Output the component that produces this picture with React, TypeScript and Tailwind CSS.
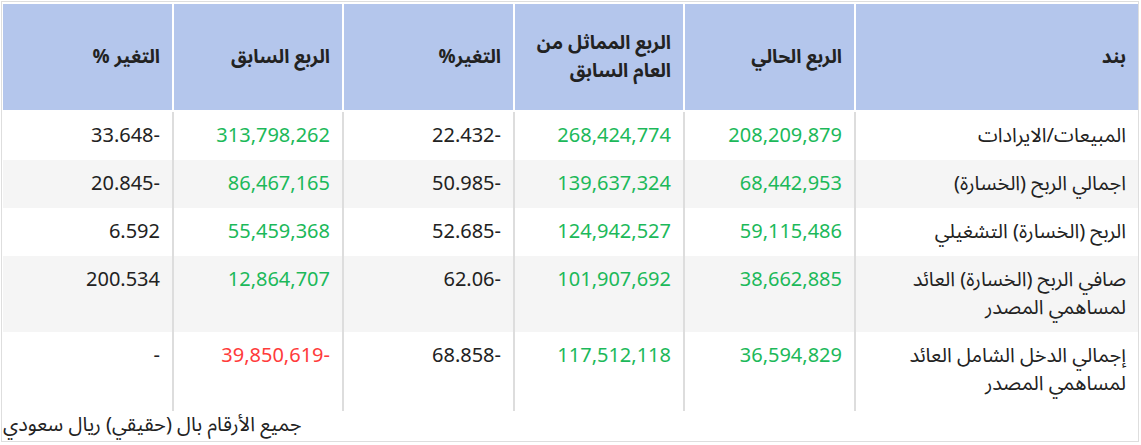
const FONT = "font-['Noto_Sans_Arabic','Noto_Sans','DejaVu_Sans',sans-serif]";

type Row = {
  item: string[];
  cur: string;
  sameLastYear: string;
  change1: string;
  prev: string;
  change2: string;
  prevNegative?: boolean;
};

const ROWS: Row[] = [
  {
    item: ["المبيعات/الايرادات"],
    cur: "208,209,879",
    sameLastYear: "268,424,774",
    change1: "-22.432",
    prev: "313,798,262",
    change2: "-33.648",
  },
  {
    item: ["اجمالي الربح (الخسارة)"],
    cur: "68,442,953",
    sameLastYear: "139,637,324",
    change1: "-50.985",
    prev: "86,467,165",
    change2: "-20.845",
  },
  {
    item: ["الربح (الخسارة) التشغيلي"],
    cur: "59,115,486",
    sameLastYear: "124,942,527",
    change1: "-52.685",
    prev: "55,459,368",
    change2: "6.592",
  },
  {
    item: ["صافي الربح (الخسارة) العائد", "لمساهمي المصدر"],
    cur: "38,662,885",
    sameLastYear: "101,907,692",
    change1: "-62.06",
    prev: "12,864,707",
    change2: "200.534",
  },
  {
    item: ["إجمالي الدخل الشامل العائد", "لمساهمي المصدر"],
    cur: "36,594,829",
    sameLastYear: "117,512,118",
    change1: "-68.858",
    prev: "-39,850,619",
    change2: "-",
    prevNegative: true,
  },
];

const HEADERS: string[][] = [
  ["بند"],
  ["الربع الحالي"],
  ["الربع المماثل من", "العام السابق"],
  ["التغير%"],
  ["الربع السابق"],
  ["التغير %"],
];

// minus sign is shown trailing, as in the source data view
const fmt = (v: string) => (v.length > 1 && v.startsWith("-") ? v.slice(1) + "-" : v);

function Lines({ lines }: { lines: string[] }) {
  return (
    <>
      {lines.map((l, i) => (
        <div key={i}>{l}</div>
      ))}
    </>
  );
}

export default function App() {
  const cell = "border-l-2 border-[#dddddd] px-3 pt-[10px] pb-[10px] align-top last:border-l-0";
  const green = "text-[#1cb95a]";

  return (
    <div className={`${FONT} ml-px mt-px mr-[2px] border border-[#dedede] pl-px pt-[2px] pb-[2px] text-[#222] bg-white`}>
      <table dir="rtl" className="w-[1135px] table-fixed border-separate border-spacing-0 text-[20px] leading-[28px]">
        <colgroup>
          <col className="w-[284px]" />
          <col className="w-[171px]" />
          <col className="w-[170px]" />
          <col className="w-[171px]" />
          <col className="w-[170px]" />
          <col />
        </colgroup>
        <thead>
          <tr>
            {HEADERS.map((h, i) => (
              <th
                key={i}
                className="h-[108px] border-l-2 border-b-2 border-white bg-[#b4c6ec] px-3 text-right align-middle text-[19px] font-bold last:border-l-0"
              >
                <Lines lines={h} />
              </th>
            ))}
          </tr>
        </thead>
        <tbody>
          {ROWS.map((r, i) => (
            <tr key={i} className={i % 2 === 1 ? "bg-[#f5f5f5]" : "bg-white"}>
              <td className={`${cell} ${i === 4 ? "pb-[13px]" : ""}`}>
                <Lines lines={r.item} />
              </td>
              <td className={`${cell} ${green}`}>
                <span dir="ltr">{r.cur}</span>
              </td>
              <td className={`${cell} ${green}`}>
                <span dir="ltr">{r.sameLastYear}</span>
              </td>
              <td className={cell}>
                <span dir="ltr">{fmt(r.change1)}</span>
              </td>
              <td className={`${cell} ${r.prevNegative ? "text-[#ff3b3b]" : green}`}>
                <span dir="ltr">{fmt(r.prev)}</span>
              </td>
              <td className={cell}>
                <span dir="ltr">{fmt(r.change2)}</span>
              </td>
            </tr>
          ))}
        </tbody>
      </table>
      <div className="text-[20px] leading-[28px]">جميع الأرقام بال (حقيقي) ريال سعودي</div>
    </div>
  );
}
